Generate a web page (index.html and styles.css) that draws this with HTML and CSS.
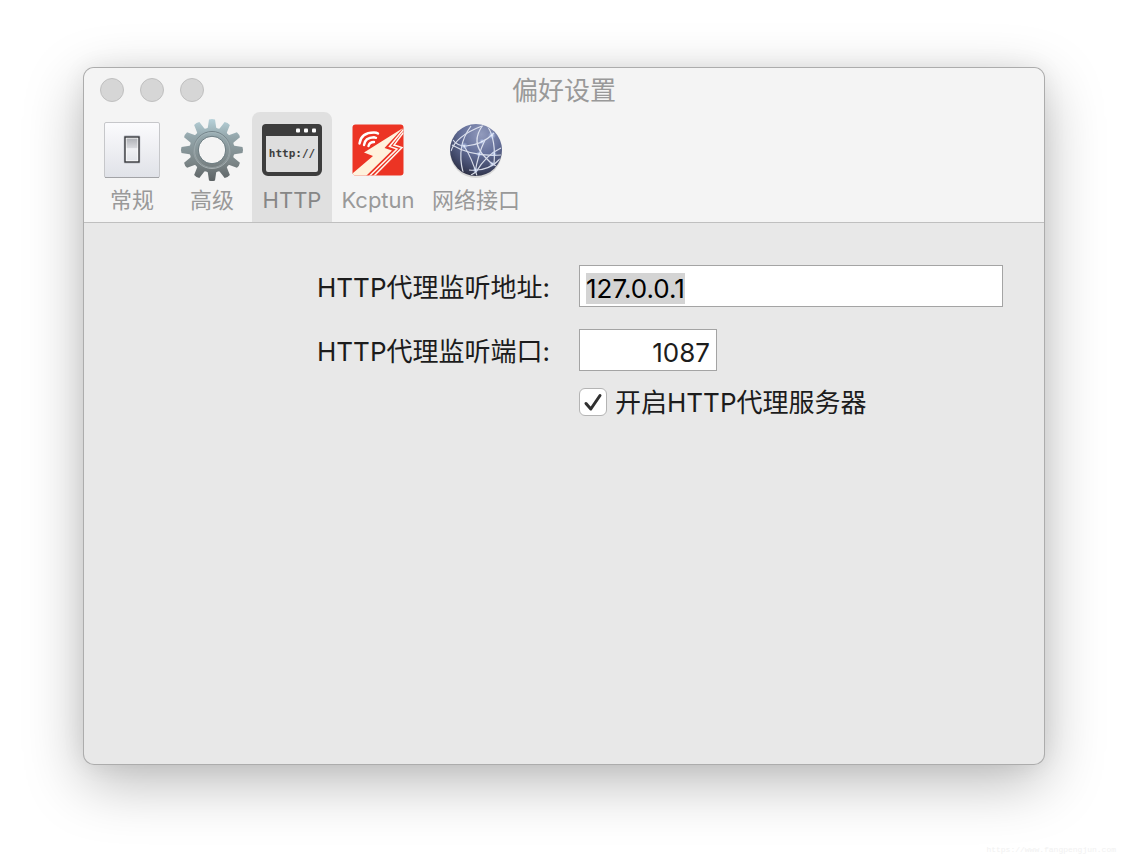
FILE: index.html
```html
<!DOCTYPE html>
<html lang="zh-CN">
<head>
<meta charset="utf-8">
<meta name="viewport" content="width=device-width, initial-scale=1">
<title>偏好设置</title>
<link rel="stylesheet" href="styles.css">
</head>
<body>
<main class="window">
  <header class="chrome">
    <div class="titlebar">
      <div class="lights">
        <button class="light" type="button" aria-label="关闭"></button>
        <button class="light" type="button" aria-label="最小化"></button>
        <button class="light" type="button" aria-label="缩放"></button>
      </div>
      <h1 class="title">偏好设置</h1>
    </div>
    <nav class="toolbar">
      <button class="tab" type="button">
        <svg class="icon" width="64" height="64" viewBox="0 0 64 64" aria-hidden="true">
          <defs>
            <linearGradient id="plate" x1="0" y1="0" x2="0" y2="1"><stop offset="0" stop-color="#fbfbfd"/><stop offset="1" stop-color="#e0e2e8"/></linearGradient>
            <linearGradient id="rocker" x1="0" y1="0" x2="0" y2="1"><stop offset="0" stop-color="#b0b2b7"/><stop offset=".42" stop-color="#d8d9dd"/><stop offset=".46" stop-color="#f0f1f4"/><stop offset="1" stop-color="#e3e5ea"/></linearGradient>
          </defs>
          <rect x="4.500" y="4.500" width="55" height="55" rx="1.500" fill="url(#plate)" stroke="#c6c7ca"/>
          <path d="M5 59.500H59" stroke="#a2a3a6"/>
          <rect x="23.500" y="17" width="17" height="29" rx="2" fill="#d2d4da"/>
          <rect x="25" y="19" width="14" height="25" fill="#fff" stroke="#34363a" stroke-width="1.400"/>
          <rect x="26.500" y="20.500" width="11" height="22" fill="url(#rocker)"/>
        </svg>
        <span class="caption">常规</span>
      </button>
      <button class="tab" type="button">
        <svg class="icon" width="64" height="64" viewBox="0 0 64 64" aria-hidden="true">
          <defs>
            <linearGradient id="steel" x1="0" y1="0" x2="0" y2="1"><stop offset="0" stop-color="#b9d4dc"/><stop offset=".3" stop-color="#93a5aa"/><stop offset=".7" stop-color="#7b8587"/><stop offset="1" stop-color="#5b6163"/></linearGradient>
            <linearGradient id="ring" x1="0" y1="0" x2="0" y2="1"><stop offset="0" stop-color="#718187"/><stop offset="1" stop-color="#a8b0b2"/></linearGradient>
            <path id="tooth" d="M29 1.500Q32 .400 35 1.500L36.200 9.500Q37 11.500 39 12.500H25Q27 11.500 27.800 9.500Z"/>
            <mask id="gear" maskUnits="userSpaceOnUse" x="0" y="0" width="64" height="64">
              <g fill="#fff">
                <circle cx="32" cy="32" r="22.500"/>
                <use href="#tooth"/><use href="#tooth" transform="rotate(30 32 32)"/><use href="#tooth" transform="rotate(60 32 32)"/><use href="#tooth" transform="rotate(90 32 32)"/><use href="#tooth" transform="rotate(120 32 32)"/><use href="#tooth" transform="rotate(150 32 32)"/><use href="#tooth" transform="rotate(180 32 32)"/><use href="#tooth" transform="rotate(210 32 32)"/><use href="#tooth" transform="rotate(240 32 32)"/><use href="#tooth" transform="rotate(270 32 32)"/><use href="#tooth" transform="rotate(300 32 32)"/><use href="#tooth" transform="rotate(330 32 32)"/>
              </g>
              <circle cx="32" cy="32" r="13.500" fill="#000"/>
            </mask>
          </defs>
          <rect width="64" height="64" fill="url(#steel)" mask="url(#gear)"/>
          <circle cx="32" cy="32" r="18.500" fill="none" stroke="url(#ring)"/>
          <circle cx="32" cy="32" r="17.500" fill="none" stroke="#b5c0c3" stroke-width=".700" opacity=".6"/>
          <circle cx="32" cy="32" r="13.700" fill="none" stroke="#64757a" stroke-width=".900"/>
        </svg>
        <span class="caption">高级</span>
      </button>
      <button class="tab selected" type="button" aria-current="page">
        <svg class="icon" width="64" height="64" viewBox="0 0 64 64" aria-hidden="true">
          <rect x="4" y="8" width="56" height="48" rx="4" fill="#dedede" stroke="#3d3d3d" stroke-width="4"/>
          <path d="M2 18V10a4 4 0 0 1 4-4h52a4 4 0 0 1 4 4v8z" fill="#3d3d3d"/>
          <g fill="#fff"><rect x="36" y="10.500" width="4" height="4" rx="1"/><rect x="44" y="10.500" width="4" height="4" rx="1"/><rect x="52" y="10.500" width="4" height="4" rx="1"/></g>
          <text class="glyph-text" x="32" y="39" text-anchor="middle">http://</text>
        </svg>
        <span class="caption">HTTP</span>
      </button>
      <button class="tab wide" type="button">
        <svg class="icon" width="64" height="64" viewBox="0 0 64 64" aria-hidden="true">
          <defs><clipPath id="badge"><rect x="6.500" y="6.500" width="51" height="51" rx="3"/></clipPath></defs>
          <g clip-path="url(#badge)">
            <rect x="6" y="6" width="52" height="52" fill="#ec3424"/>
            <path d="M57 10L18 34.500L27 38L7 55V58H20L46 32.500L38.500 30Z" fill="#fff2dc"/>
            <g fill="none" stroke="#fff8ef" stroke-width="1.500">
              <path d="M57.500 11.500L43.500 28.500L51 31L23 58.500"/>
              <path d="M57.500 14.500L48 27L56 29.500L27.500 58.500"/>
            </g>
            <g fill="none" stroke="#fff" stroke-width="2.400" stroke-linecap="round">
              <path d="M13.500 25.500Q15 14.500 28 14.500Q30.500 14.500 32 15.500"/>
              <path d="M18 27Q19 19.500 28 19.300L30 19.800"/>
              <path d="M22.500 28Q23.500 24 28 24"/>
            </g>
          </g>
        </svg>
        <span class="caption">Kcptun</span>
      </button>
      <button class="tab" type="button">
        <svg class="icon" width="64" height="64" viewBox="0 0 64 64" aria-hidden="true">
          <defs>
            <radialGradient id="globe" cx=".6" cy=".2" r=".85"><stop offset="0" stop-color="#929bbd"/><stop offset=".45" stop-color="#65709a"/><stop offset=".8" stop-color="#3f4665"/><stop offset="1" stop-color="#2a2c3e"/></radialGradient>
            <radialGradient id="spark"><stop offset="0" stop-color="#fff"/><stop offset=".25" stop-color="#dce8ff" stop-opacity=".6"/><stop offset="1" stop-color="#a9c4ff" stop-opacity="0"/></radialGradient>
            <clipPath id="sphere"><circle cx="32" cy="32" r="25.500"/></clipPath>
          </defs>
          <ellipse cx="32" cy="34" rx="26" ry="26" fill="#000" opacity=".12"/>
          <circle cx="32" cy="32" r="26" fill="url(#globe)"/>
          <g clip-path="url(#sphere)" fill="none" stroke="#e8ecf6" stroke-width="1.200" opacity=".9">
            <path d="M7 33Q12 18 38 8"/>
            <path d="M27 8Q12 28 19 54"/>
            <path d="M9 22Q13 28 22 28Q38 27 50 15"/>
            <path d="M8 27Q28 39 57 37"/>
            <path d="M39 7Q26 24 41 39Q46 45 52 48"/>
            <path d="M20 28Q28 40 33 58"/>
            <path d="M44 9Q52 22 50 46"/>
            <path d="M41 22Q34 36 31 55"/>
            <path d="M57 30Q42 37 32 54L27 57"/>
            <path d="M25 52Q44 54 56 41"/>
          </g>
          <g><circle cx="20" cy="28" r="4" fill="url(#spark)"/><circle cx="38" cy="23.500" r="3" fill="url(#spark)"/><circle cx="48" cy="17.500" r="4" fill="url(#spark)"/><circle cx="35" cy="36" r="3" fill="url(#spark)"/><circle cx="50" cy="36" r="3" fill="url(#spark)"/><circle cx="48" cy="46" r="3" fill="url(#spark)"/><circle cx="31.500" cy="52" r="3" fill="url(#spark)"/></g>
        </svg>
        <span class="caption">网络接口</span>
      </button>
    </nav>
  </header>
  <form class="form">
    <label class="label" for="address">HTTP代理监听地址:</label>
    <input class="field" id="address" type="text" value="127.0.0.1" autocomplete="off" spellcheck="false">
    <label class="label" for="port">HTTP代理监听端口:</label>
    <input class="field port" id="port" type="text" inputmode="numeric" value="1087" autocomplete="off">
    <label class="option"><input class="tick" type="checkbox" checked><span class="option-text">开启HTTP代理服务器</span></label>
  </form>
</main>
<footer class="source">https://www.fangpengjun.com</footer>
<script src="script.js"></script>
</body>
</html>
```

FILE: styles.css
```css
* {
  box-sizing: border-box;
}

body {
  display: flex;
  flex-direction: column;
  min-height: 100vh;
  margin: 0;
  padding: 68px 84px 0;
  background: #fff;
  color: #1c1c1c;
  font-family: Inter, "Noto Sans CJK SC", sans-serif;
  font-size: 26px;
  line-height: 40px;
}

button,
input {
  margin: 0;
  font: inherit;
  color: inherit;
}

.window {
  flex: 1;
  border-radius: 10px;
  background: #e8e8e8;
  box-shadow: 0 0 0 1px #acacac, 0 18px 60px rgba(0, 0, 0, .28), 0 0 24px rgba(0, 0, 0, .07);
}

.chrome {
  border-bottom: 1px solid #bfbfbf;
  border-radius: 10px 10px 0 0;
  background: #f4f4f4;
  color: #999;
}

.titlebar {
  display: grid;
  grid-template-columns: 1fr auto 1fr;
  align-items: center;
  height: 44px;
  padding: 0 16px;
}

.lights {
  display: flex;
  gap: 16px;
}

.light {
  width: 24px;
  height: 24px;
  padding: 0;
  border: 1px solid #c0c0c0;
  border-radius: 50%;
  background: #d6d6d6;
}

.title {
  margin: 0;
  padding-top: 2px;
  font-size: 26px;
  font-weight: 400;
}

.toolbar {
  display: flex;
  padding: 0 8px;
}

.tab {
  display: flex;
  flex-direction: column;
  align-items: center;
  min-width: 80px;
  height: 110px;
  padding: 6px 8px 0;
  border: 0;
  border-radius: 8px 8px 0 0;
  background: none;
}

.tab.wide {
  min-width: 92px;
}

.tab.selected {
  background: #e0e0e0;
  color: #868686;
}

.icon {
  display: block;
}

.glyph-text {
  fill: #3d3d3d;
  font: bold 11px "DejaVu Sans Mono", monospace;
}

.caption {
  font-size: 22px;
  line-height: 36px;
}

.form {
  display: grid;
  grid-template-columns: minmax(0, 466fr) minmax(0, 424fr);
  gap: 12px 29px;
  align-items: center;
  padding: 37px 41px 37px 0;
}

.label {
  padding: 8px 0 4px;
  text-align: right;
}

.field {
  width: 100%;
  height: 42px;
  padding: 5px 6px 0;
  border: 1px solid #a4a4a4;
  border-radius: 0;
  outline: 0;
  background: #fff;
  line-height: 34px;
}

.field::selection {
  background: #d4d4d4;
  color: #000;
}

.port {
  width: 138px;
  text-align: right;
}

.option {
  display: flex;
  grid-column: 2;
  gap: 8px;
  align-items: center;
  line-height: 26px;
}

.option-text {
  padding-top: 2px;
}

.tick {
  width: 28px;
  height: 28px;
  border: 1px solid #b4b4b4;
  border-radius: 6px;
  appearance: none;
  background: #fff;
}

.tick:checked {
  background: #fff url("data:image/svg+xml,%3Csvg xmlns='http://www.w3.org/2000/svg' viewBox='0 0 26 26'%3E%3Cpath d='M6 14.500L10.800 20L20 6.500' fill='none' stroke='%23303030' stroke-width='3' stroke-linecap='round' stroke-linejoin='round'/%3E%3C/svg%3E") center / 26px;
}

.source {
  height: 100px;
  margin-right: -72px;
  padding-top: 80px;
  color: #f1f1f1;
  font: 8px/12px "Liberation Mono", monospace;
  text-align: right;
}
```

FILE: script.js
```js
const address = document.getElementById("address");
address.focus();
address.select();
```
